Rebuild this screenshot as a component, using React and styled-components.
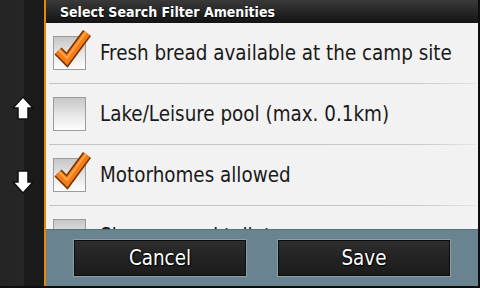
import React from 'react'
import styled, { createGlobalStyle } from 'styled-components'

const GlobalStyle = createGlobalStyle`
    html, body {
        margin: 0;
        padding: 0;
        background: #0e0e0e;
    }
    body {
        font-family: "DejaVu Sans Condensed", "DejaVu Sans", sans-serif;
        font-stretch: condensed;
    }
`

const Screen = styled.div`
    width: 480px;
    height: 288px;
    box-sizing: border-box;
    padding: 0 2px 2px 0;
    display: flex;
    overflow: hidden;
    background: #0e0e0e;
`

const Sidebar = styled.div`
    width: 46px;
    flex: none;
    border-right: 2px solid #e8860c;
    background: linear-gradient(to right, #242424 0, #262626 24px, #1b1b1b 24px, #1a1a1a 44px);
    display: flex;
    flex-direction: column;
    align-items: center;
    padding-top: 96px;
    gap: 50px;
    box-sizing: border-box;
    padding-left: 2px;
`

const Main = styled.div`
    flex: 1;
    display: flex;
    flex-direction: column;
    min-width: 0;
`

const Header = styled.div`
    height: 23px;
    flex: none;
    display: flex;
    align-items: center;
    padding-left: 14px;
    background: linear-gradient(#3a3a3a, #222 60%, #141414);
    color: #fff;
    font-weight: bold;
    font-size: 14px;
    text-shadow: 0 1px 1px #000;
`

const List = styled.div`
    flex: 1;
    overflow: hidden;
    background: #f2f2f2;
`

const Row = styled.div`
    height: 60px;
    display: flex;
    align-items: center;
    padding-left: 7px;
    gap: 14px;
    position: relative;
    margin-bottom: 1px;
    &::after {
        content: '';
        position: absolute;
        left: 3px;
        right: 2px;
        bottom: -1px;
        height: 1px;
        background: linear-gradient(to right, #c4c4c4, #c8c8c8 85%, #e4e4e4);
    }
`

const Box = styled.div`
    width: 31px;
    height: 32px;
    flex: none;
    position: relative;
    border: 1px solid #9c9c9c;
    background: linear-gradient(#c6c6c6, #e8e8e8 55%, #fdfdfd);
`

const CheckMark = styled.svg`
    position: absolute;
    left: -1px;
    top: -10px;
    overflow: visible;
`

const Label = styled.span`
    font-size: 20.4px;
    color: #1a1a1a;
    white-space: nowrap;
`

const BottomBar = styled.div`
    height: 57px;
    flex: none;
    border-top: 1px solid #56707e;
    box-sizing: border-box;
    background: #6a8391;
    display: flex;
    justify-content: center;
    align-items: flex-start;
    padding-top: 9px;
    gap: 30px;
`

const Button = styled.div`
    width: 174px;
    height: 38px;
    box-sizing: border-box;
    border: 1px solid #8e9ea8;
    box-shadow: inset 0 0 0 1px #0c0c0c;
    background: linear-gradient(#2e2e2e, #232323 50%, #1b1b1b);
    color: #fff;
    font-size: 20.4px;
    display: flex;
    align-items: center;
    justify-content: center;
    text-shadow: 0 0 2px #000, 1px 1px 1px #000;
`

const Arrow = ({ down }) => (
    <svg width="22" height="24" viewBox="0 0 22 24" style={down ? { transform: 'scaleY(-1)' } : undefined}>
        <path d="M11 1 L21 12 L16 12 L16 23 L6 23 L6 12 L1 12 Z" fill="#fff" stroke="#111" strokeWidth="1.5" strokeLinejoin="miter" />
    </svg>
)

const Check = () => (
    <CheckMark width="40" height="40" viewBox="0 0 40 40">
        <polyline points="5,24 14,33 34,6" fill="none" stroke="#7a3300" strokeWidth="10" strokeLinejoin="miter" strokeMiterlimit="10" />
        <polyline points="5,24 14,33 34,6" fill="none" stroke="#f47b16" strokeWidth="7" strokeLinejoin="miter" strokeMiterlimit="10" />
        <polyline points="6,23 14,31 33,5" fill="none" stroke="#ffa648" strokeWidth="2" strokeLinejoin="miter" />
    </CheckMark>
)

const items = [
    { label: 'Fresh bread available at the camp site', checked: true },
    { label: 'Lake/Leisure pool (max. 0.1km)', checked: false },
    { label: 'Motorhomes allowed', checked: true },
    { label: 'Showers and toilets', checked: false },
]

const App = () => (
    <>
        <GlobalStyle />
        <Screen>
            <Sidebar>
                <Arrow />
                <Arrow down />
            </Sidebar>
            <Main>
                <Header>Select Search Filter Amenities</Header>
                <List>
                    {items.map((item) => (
                        <Row key={item.label}>
                            <Box>{item.checked && <Check />}</Box>
                            <Label>{item.label}</Label>
                        </Row>
                    ))}
                </List>
                <BottomBar>
                    <Button>Cancel</Button>
                    <Button>Save</Button>
                </BottomBar>
            </Main>
        </Screen>
    </>
)

export default App
